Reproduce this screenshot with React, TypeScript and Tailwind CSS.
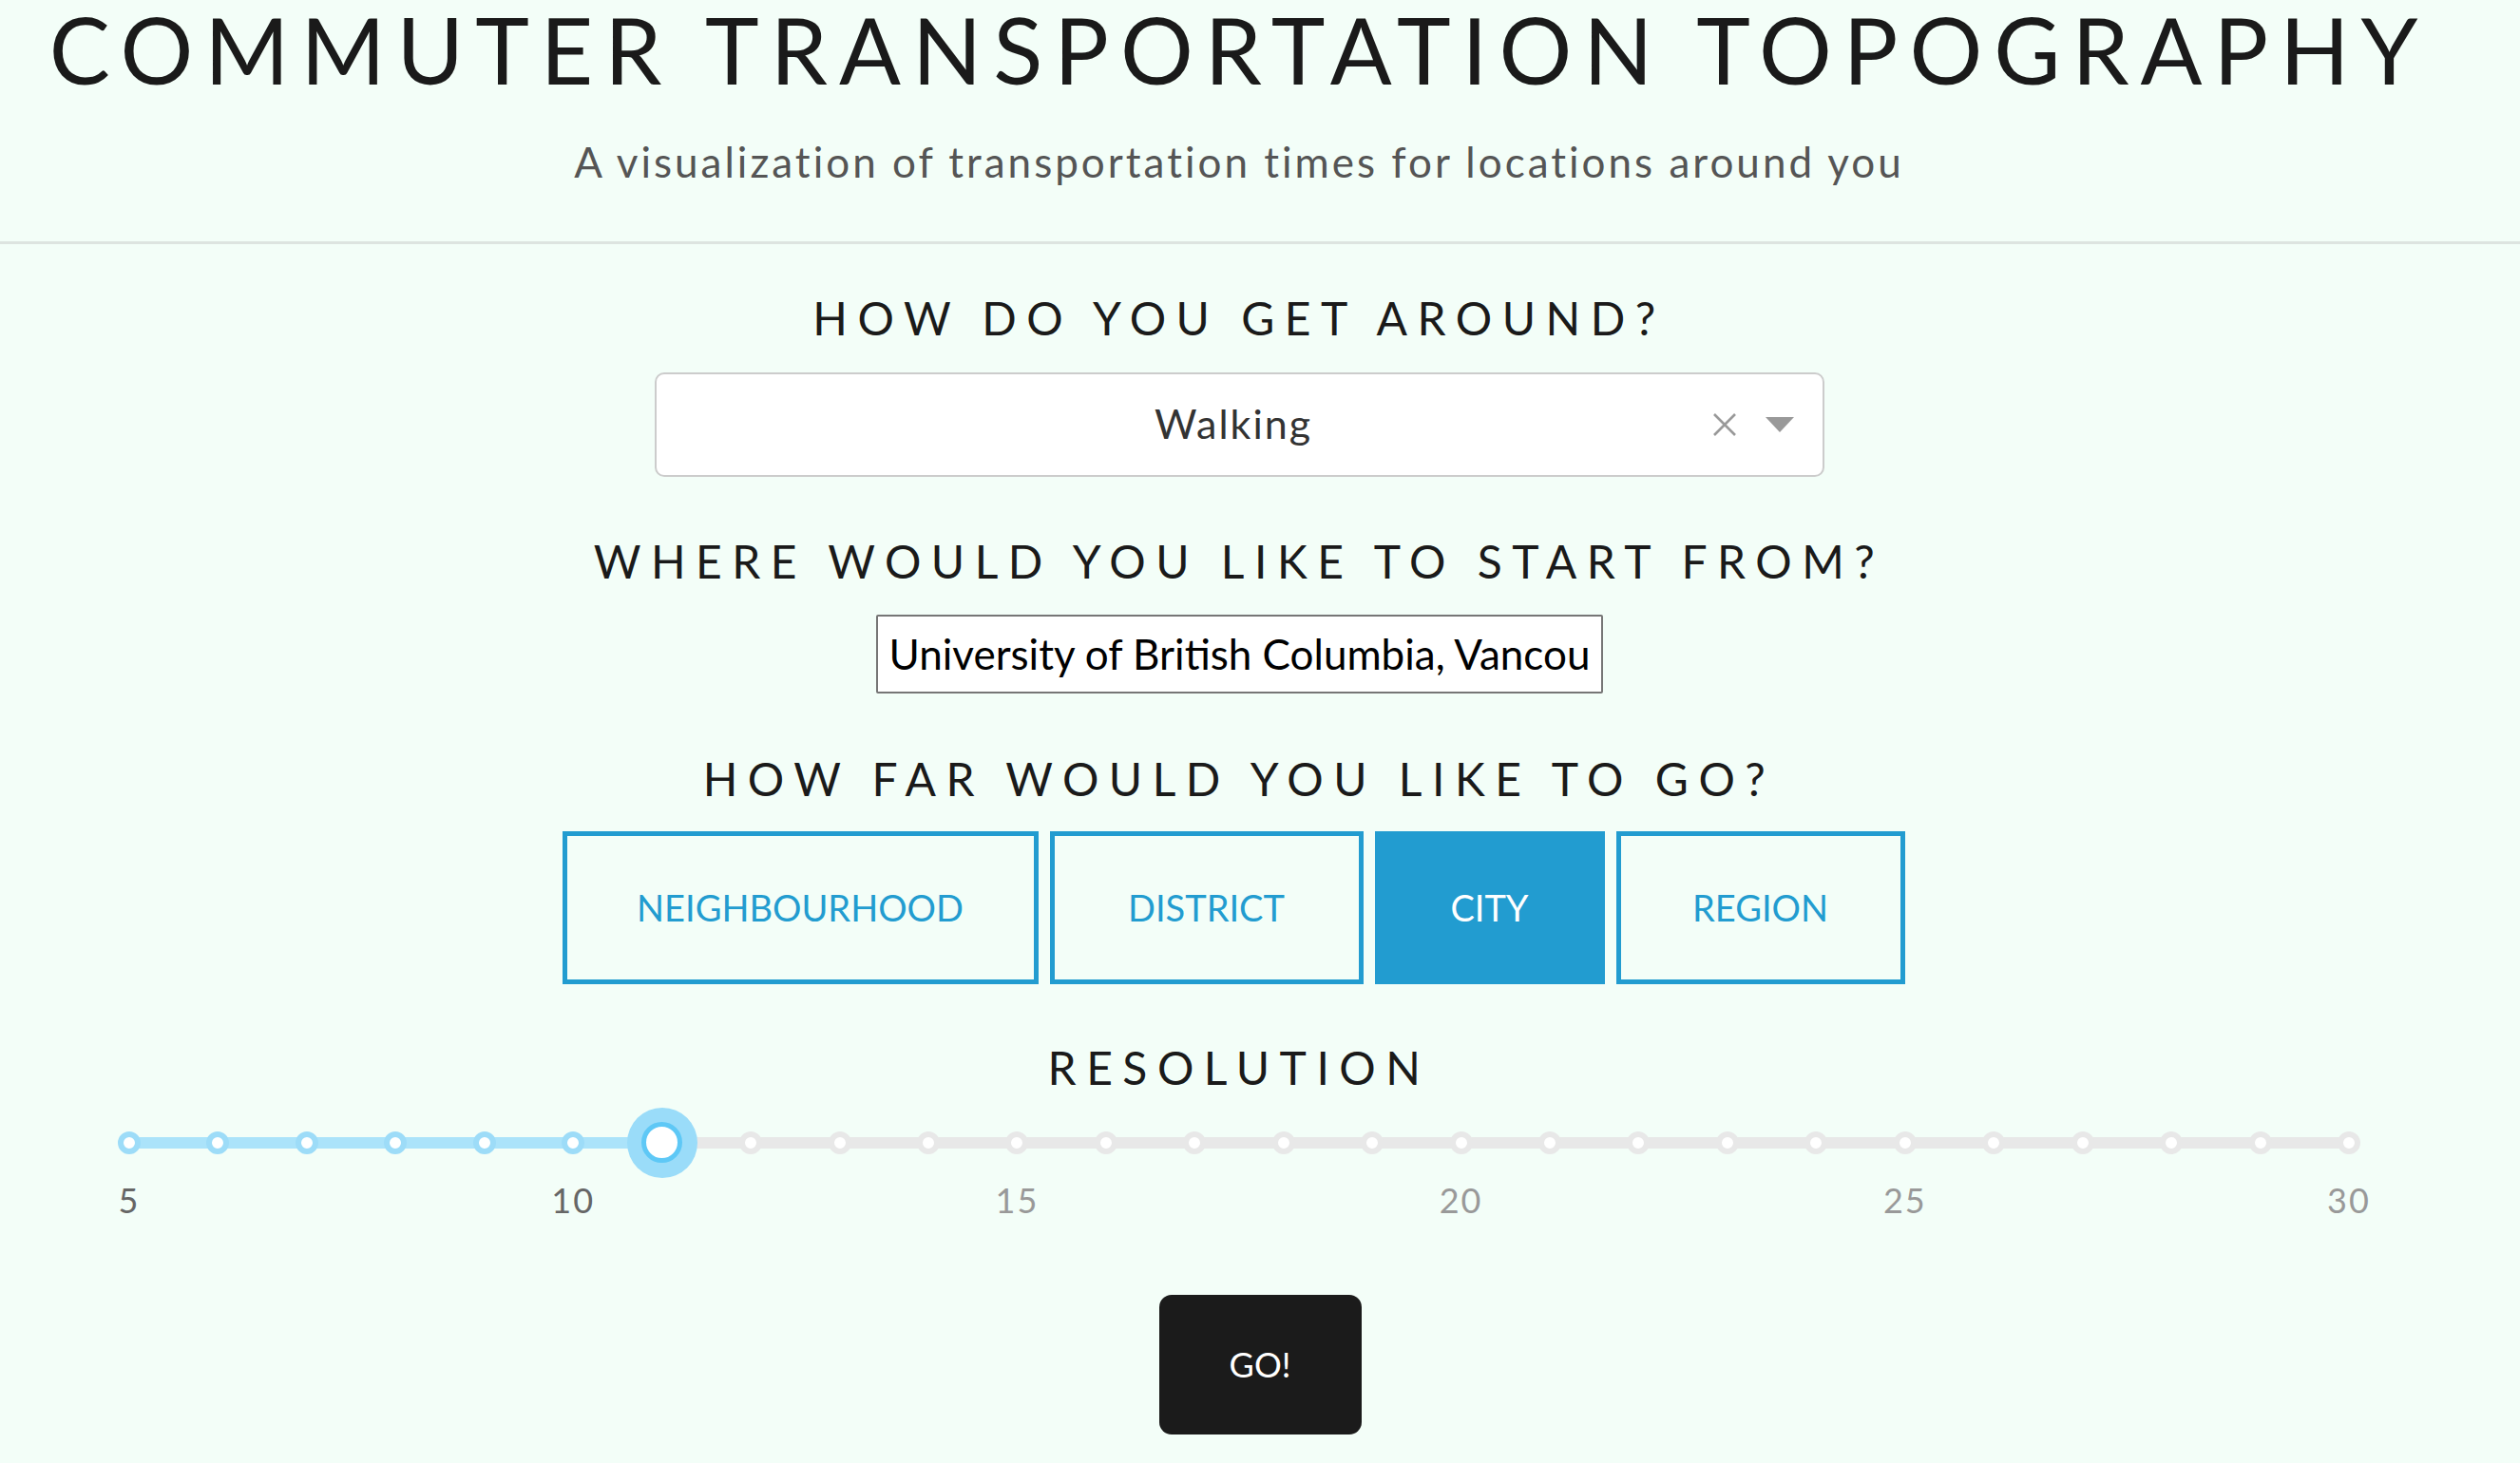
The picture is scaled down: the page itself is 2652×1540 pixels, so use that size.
import React from 'react';
import clsx from 'clsx';

const SCALES = [
  { label: 'Neighbourhood', width: 'w-[501px]' },
  { label: 'District', width: 'w-[330px]' },
  { label: 'City', width: 'w-[242px]' },
  { label: 'Region', width: 'w-[304px]' },
];

function Heading({ children, className }: { children: React.ReactNode; className?: string }) {
  return (
    <h2 className={clsx('text-center text-[48px] leading-none tracking-[10.5px] text-[#1a1a1a] uppercase', className)}>
      {children}
    </h2>
  );
}

function ModeSelect({ value }: { value: string }) {
  return (
    <div className="mt-[33px] flex h-[110px] w-[1231px] items-center rounded-[10px] border-2 border-[#cccccc] bg-white">
      <div className="flex-1 pl-[112px] text-center text-[43px] tracking-[2px] text-[#333]">{value}</div>
      <svg className="ml-[8px] h-[26px] w-[26px]" viewBox="0 0 26 26">
        <path d="M2 2 L24 24 M24 2 L2 24" stroke="#999" strokeWidth="2.6" />
      </svg>
      <svg className="ml-[30px] mr-[30px] h-[16px] w-[30px]" viewBox="0 0 30 16">
        <path d="M0 0 H30 L15 16 Z" fill="#999" />
      </svg>
    </div>
  );
}

function ResolutionSlider({ min, max, value }: { min: number; max: number; value: number }) {
  const ticks = Array.from({ length: max - min + 1 }, (_, i) => i + min);
  const labels = ticks.filter((t) => t % 5 === 0);
  const pct = ((value - min) / (max - min)) * 100;

  return (
    <div className="mt-[18px] w-[2336px]">
      <div className="relative h-[74px]">
        <div className="absolute inset-x-0 top-[31px] h-[12px] bg-[#e8e8e8]" />
        <div className="absolute left-0 top-[31px] h-[12px] bg-[#abe3fa]" style={{ width: `${pct}%` }} />
        <div className="absolute inset-y-0 -left-[12px] -right-[12px] flex items-center justify-between">
          {ticks.map((t) => (
            <span
              key={t}
              className={clsx(
                'h-[24px] w-[24px] rounded-full border-[6px] bg-white',
                t <= value ? 'border-[#9ddcf8]' : 'border-[#e8e8e8]'
              )}
            />
          ))}
        </div>
        <div
          className="absolute top-0 flex h-[74px] w-[74px] -translate-x-1/2 items-center justify-center rounded-full bg-[#9adcf9]"
          style={{ left: `${pct}%` }}
        >
          <div className="h-[43px] w-[43px] rounded-full border-[5px] border-[#5ec8f6] bg-white" />
        </div>
      </div>
      <div className="mt-[5px] flex justify-between">
        {labels.map((l) => (
          <div key={l} className="flex w-0 justify-center">
            <span className={clsx('whitespace-nowrap text-[36px] leading-none tracking-[2px]', l <= value ? 'text-[#666]' : 'text-[#999]')}>
              {l}
            </span>
          </div>
        ))}
      </div>
    </div>
  );
}

export default function App() {
  const selected = 'City';

  return (
    <div className="min-h-screen bg-[#f3fef8] pb-[40px] font-['Lato',sans-serif]">
      <header className="border-b-[3px] border-[#dde4e0]">
        <div className="w-[2608px] pb-[62px] text-center">
          <h1 className="text-[96px] leading-[1.08] tracking-[12px] text-[#1a1a1a]">COMMUTER TRANSPORTATION TOPOGRAPHY</h1>
          <p className="mt-[44px] text-[44px] leading-none tracking-[3px] text-[#555]">
            A visualization of transportation times for locations around you
          </p>
        </div>
      </header>

      <main className="flex w-[2608px] flex-col items-center">
        <Heading className="mt-[54px]">How do you get around?</Heading>
        <ModeSelect value="Walking" />

        <Heading className="mt-[65px]">Where would you like to start from?</Heading>
        <input
          readOnly
          value="University of British Columbia, Vancouver, BC, Canada"
          className="mt-[32px] h-[83px] w-[765px] rounded-[2px] border-2 border-[#767676] bg-white px-[12px] text-[44px] text-black outline-none"
        />

        <Heading className="mt-[66px]">How far would you like to go?</Heading>
        <div className="mt-[31px] flex gap-[12px] pr-[12px]">
          {SCALES.map((s) => (
            <button
              key={s.label}
              className={clsx(
                'h-[161px] border-[5px] border-[#229cd0] text-[38px] uppercase',
                s.width,
                s.label === selected ? 'bg-[#229cd0] text-white' : 'bg-transparent text-[#229cd0]'
              )}
            >
              {s.label}
            </button>
          ))}
        </div>

        <Heading className="mt-[64px]">Resolution</Heading>
        <ResolutionSlider min={5} max={30} value={11} />
      </main>

      <div className="mt-[82px] flex justify-center">
        <button className="h-[147px] w-[213px] rounded-[13px] bg-[#1b1b1b] text-[36px] text-white">GO!</button>
      </div>
    </div>
  );
}
